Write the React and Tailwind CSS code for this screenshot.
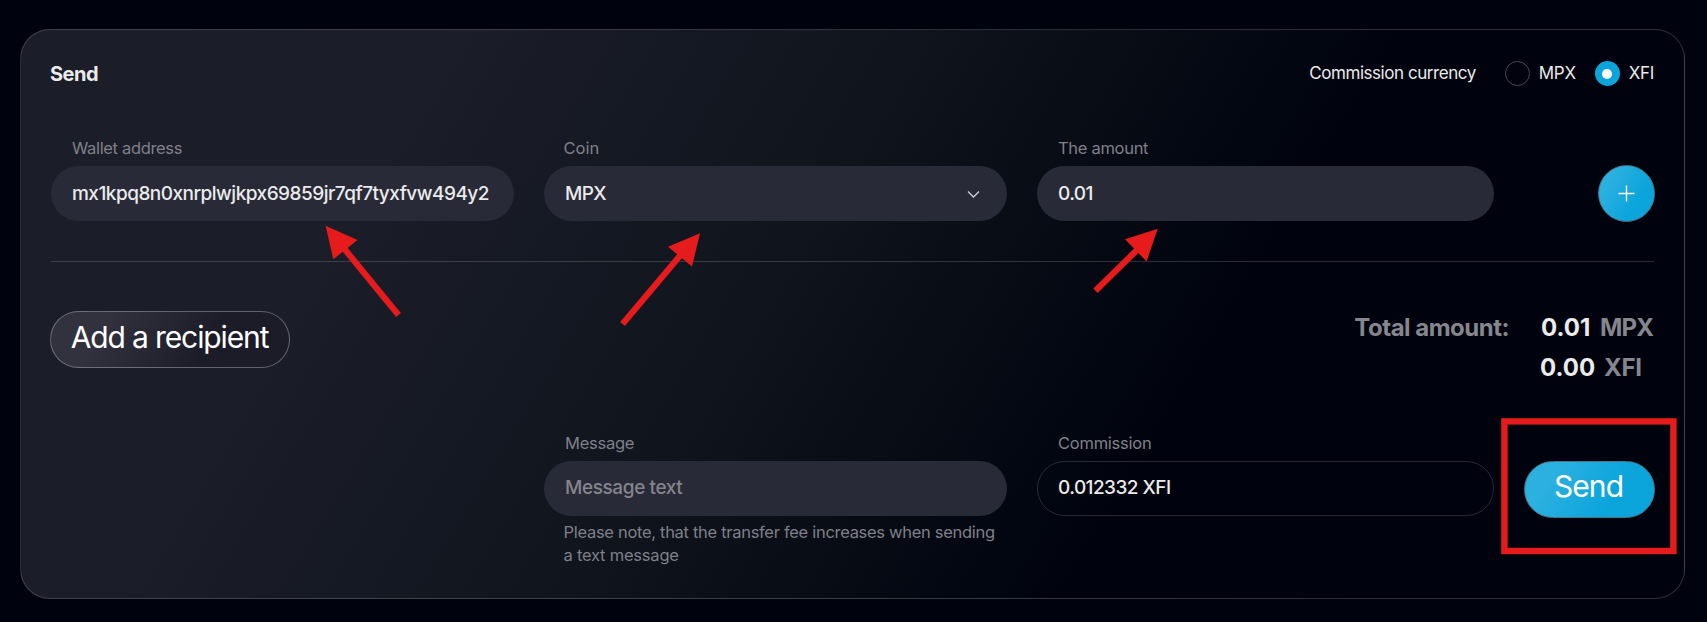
import React from "react";

function Field({ label, labelClass = "", className = "", children, hint }) {
  return (
    <div className={"flex shrink-0 flex-col " + className}>
      <span className={"h-6 whitespace-nowrap text-[16.5px] leading-6 text-[#7f8089] " + labelClass}>{label}</span>
      {children}
      {hint}
    </div>
  );
}

function Radio({ label, checked }) {
  return (
    <label className="flex items-center gap-[9px]">
      {checked ? (
        <span className="flex size-[25px] items-center justify-center rounded-full bg-[#0ba5dc]">
          <span className="size-[10px] rounded-full bg-white" />
        </span>
      ) : (
        <span className="size-[25px] rounded-full border border-[#454651]" />
      )}
      <span className="pt-px tracking-[-0.3px]">{label}</span>
    </label>
  );
}

const inputBox =
  "mt-[6px] flex h-[55px] items-center justify-between rounded-[27.5px] pl-[21px] text-[19px] font-medium whitespace-nowrap";

function Arrows() {
  return (
    <svg className="pointer-events-none absolute inset-0" width="1707" height="622" viewBox="0 0 1707 622">
      <g fill="#e61b1b" stroke="#e61b1b">
        <path d="M325.6 225.7L357.5 240L333.3 259.3Z" stroke="none" />
        <path d="M342 246L398.5 315" strokeWidth="6.2" />
        <path d="M700 233.3L668 246.7L692 266.5Z" stroke="none" />
        <path d="M684 251L622.5 324" strokeWidth="6.2" />
        <path d="M1157.7 228.7L1125 239.3L1146.6 261.5Z" stroke="none" />
        <path d="M1140 247L1095.5 290.7" strokeWidth="6.2" />
        <rect x="1504.4" y="421.4" width="169" height="129.6" fill="none" strokeWidth="6.4" />
      </g>
    </svg>
  );
}

export default function App() {
  return (
    <main className="relative h-[622px] w-[1707px] overflow-hidden bg-[#00030d] pt-[29px] pl-5 font-['Inter','Liberation_Sans',sans-serif] text-[#ebebeb]">
      <section className="flex h-[570px] w-[1665px] flex-col rounded-[30px] border border-white/17 bg-[linear-gradient(121deg,#1b1d28_22%,#10151e_43%,#00030d_69%)] px-[30px] pt-[31px]">
        <header className="flex h-[25px] items-center justify-between">
          <h1 className="-ml-px text-[20px] font-bold tracking-[-0.5px]">Send</h1>
          <div className="flex items-center text-[17px] whitespace-nowrap">
            <span className="mr-[29px] pt-px tracking-[-0.45px]">Commission currency</span>
            <div className="flex gap-[19px]">
              <Radio label="MPX" />
              <Radio label="XFI" checked />
            </div>
          </div>
        </header>

        <div className="mt-[50px] flex items-end gap-[30px]">
          <Field label="Wallet address" className="w-[463px]" labelClass="pl-[21px] tracking-[-0.34px]">
            <div className={inputBox + " bg-[#282a38] pt-px tracking-[-0.51px]"}>
              mx1kpq8n0xnrplwjkpx69859jr7qf7tyxfvw494y2
            </div>
          </Field>
          <Field label="Coin" className="w-[463px]" labelClass="pl-[19.5px]">
            <div className={inputBox + " bg-[#282a38] pt-px pr-[27px] tracking-[-0.6px]"}>
              MPX
              <svg width="13" height="9" viewBox="0 0 13 9" fill="none" stroke="#d0d0d8" strokeWidth="1.3">
                <path d="M1 1.5L6.5 7L12 1.5" />
              </svg>
            </div>
          </Field>
          <Field label="The amount" className="w-[457px]" labelClass="pl-[21px] tracking-[-0.3px]">
            <div className={inputBox + " bg-[#282a38] pt-px tracking-[-0.6px]"}>0.01</div>
          </Field>
          <button className="-mr-px -mb-px ml-auto flex size-[57px] items-center justify-center rounded-full border border-[#4a7587] bg-[linear-gradient(121deg,#2cb0df_22%,#0ba5dc_66%)] bg-origin-border">
            <svg width="17" height="17" viewBox="0 0 17 17" stroke="#ffffff" strokeWidth="1.4">
              <path d="M8.5 0.5V16.5M0.5 8.5H16.5" />
            </svg>
          </button>
        </div>

        <hr className="mt-10 h-px border-0 bg-white/16" />

        <div className="mt-[45px] flex h-20 items-start justify-between">
          <button className="mt-1 -ml-px flex h-[57px] w-[240px] items-center justify-center rounded-[28.5px] border border-white/30 bg-[linear-gradient(121deg,#31323d_22%,#1b1c27_66%)] pr-px pb-[5px] text-[30px] tracking-[-1.12px] whitespace-nowrap text-white">
            Add a recipient
          </button>
          <div className="flex pt-px text-[24px] leading-10 font-bold whitespace-nowrap text-[#85868e]">
            <span className="mr-[31px] tracking-[-0.5px]">Total amount:</span>
            <div className="w-[114px]">
              <div className="flex pl-[1px]">
                <span className="w-[59px] text-[#ebebeb]">0.01</span>
                <span className="tracking-[-0.8px]">MPX</span>
              </div>
              <div className="flex">
                <span className="w-[64px] text-[#ebebeb]">0.00</span>
                <span className="tracking-[-0.3px]">XFI</span>
              </div>
            </div>
          </div>
        </div>

        <div className="mt-[44px] flex items-start gap-[30px] pl-[493px]">
          <Field
            label="Message"
            className="w-[463px]"
            labelClass="pl-[21px] tracking-[-0.25px]"
            hint={
              <p className="mt-[5px] pl-[19.5px] text-[16.5px] leading-[23px] whitespace-nowrap text-[#7f8089]">
                <span className="tracking-[-0.3px]">Please note, that the transfer fee increases when sending</span>
                <br />
                <span className="tracking-[-0.22px]">a text message</span>
              </p>
            }
          >
            <div className={inputBox + " bg-[#282a38] tracking-[-0.4px] text-[#84858b]"}>Message text</div>
          </Field>
          <Field label="Commission" className="w-[457px]" labelClass="pl-[21px] tracking-[-0.25px]">
            <div className={inputBox + " border border-white/15 !pl-5 tracking-[-0.55px]"}>0.012332 XFI</div>
          </Field>
          <button className="mt-[30px] -mr-px ml-auto flex h-[57px] w-[132px] items-center justify-center rounded-[28.5px] border border-[#4a7587] bg-[linear-gradient(121deg,#2cb0df_22%,#0ba5dc_66%)] bg-origin-border pr-[2px] pb-[6px] text-[30px] tracking-[-0.9px] text-white">
            Send
          </button>
        </div>
      </section>
      <Arrows />
    </main>
  );
}
